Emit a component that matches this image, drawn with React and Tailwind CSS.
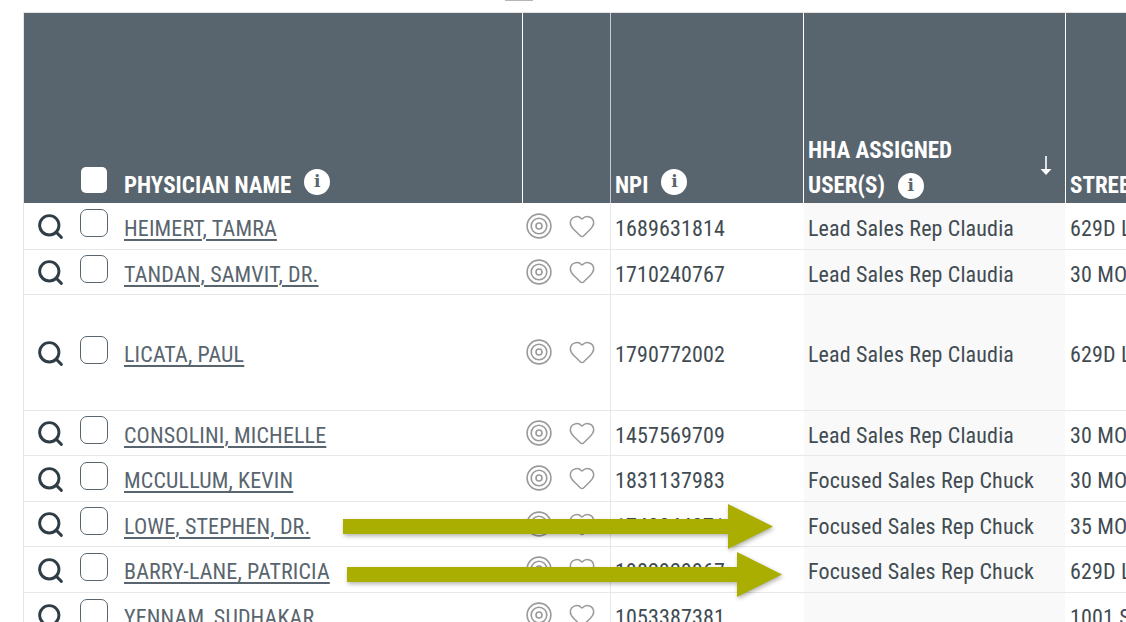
import { Search, Heart } from "lucide-react";

const rows = [
  { name: "HEIMERT, TAMRA", npi: "1689631814", user: "Lead Sales Rep Claudia", street: "629D LAKE", h: "h-[47px]" },
  { name: "TANDAN, SAMVIT, DR.", npi: "1710240767", user: "Lead Sales Rep Claudia", street: "30 MONTGOMERY", h: "h-[45px]" },
  { name: "LICATA, PAUL", npi: "1790772002", user: "Lead Sales Rep Claudia", street: "629D LAKE", h: "h-[116px]" },
  { name: "CONSOLINI, MICHELLE", npi: "1457569709", user: "Lead Sales Rep Claudia", street: "30 MONTGOMERY", h: "h-[45px]" },
  { name: "MCCULLUM, KEVIN", npi: "1831137983", user: "Focused Sales Rep Chuck", street: "30 MONTGOMERY", h: "h-[46px]" },
  { name: "LOWE, STEPHEN, DR.", npi: "1740244071", user: "Focused Sales Rep Chuck", street: "35 MONTGOMERY", h: "h-[45px]" },
  { name: "BARRY-LANE, PATRICIA", npi: "1982929967", user: "Focused Sales Rep Chuck", street: "629D LAKE", h: "h-[46px]" },
  { name: "YENNAM, SUDHAKAR", npi: "1053387381", user: "", street: "1001 SOUTH", h: "h-[46px]" },
];

const cols = "grid grid-cols-[50px_46px_402px_1px_87px_1px_192px_1px_261px_1px_200px]";

const Info = () => (
  <span className="inline-flex items-center justify-center w-[26px] h-[26px] rounded-full bg-white text-[#59656e] text-[17px] font-bold [font-family:'DejaVu_Serif',serif] [font-stretch:100%] leading-none">
    i
  </span>
);

const TargetIcon = () => (
  <svg width="26" height="26" viewBox="0 0 26 26" fill="none" stroke="#9a9a9a" strokeWidth="1.6">
    <circle cx="13" cy="13" r="11.9" />
    <circle cx="13" cy="13" r="7.8" />
    <circle cx="13" cy="13" r="3" />
  </svg>
);

const Arrow = ({ className, width }) => (
  <svg className={className} width={width} height="45" viewBox={`0 0 ${width} 45`} style={{ filter: "drop-shadow(1px 2px 2px rgba(0,0,0,0.3))" }}>
    <polygon
      fill="#a9ae00"
      points={`0,15 ${width - 45},15 ${width - 45},0 ${width},22.5 ${width - 45},45 ${width - 45},30 0,30`}
    />
  </svg>
);

export default function App() {
  return (
    <div className="relative w-[1126px] h-[622px] overflow-hidden bg-white [font-family:Roboto,sans-serif] [font-stretch:75%]">
      {/* scrollbar stub above the table */}
      <div className="h-[1px] w-[28px] ml-[505px] bg-[#b5b5b5]"></div>
      <div className="ml-[23px] mt-[11px] border-l border-[#e6e6e6] w-[1200px]">
        {/* Header */}
        <div className={`${cols} h-[191px] bg-[#59656e] border-t border-[#e3e3e3] text-white font-bold text-[23px] leading-[35px]`}>
          <div></div>
          <div className="flex items-end pb-[10px] pl-[7px]">
            <div className="w-[26px] h-[26px] rounded-[5px] bg-white"></div>
          </div>
          <div className="flex items-end gap-[13px] pl-[4px]">
            <span>PHYSICIAN NAME</span>
            <span className="mb-[6px]"><Info /></span>
          </div>
          <div className="bg-white"></div>
          <div></div>
          <div className="bg-[#c9cdd0]"></div>
          <div className="flex items-end gap-[13px] pl-[4px]">
            <span>NPI</span>
            <span className="mb-[6px]"><Info /></span>
          </div>
          <div className="bg-white"></div>
          <div className="relative flex items-end pl-[4px]">
            <div>
              <div>HHA ASSIGNED</div>
              <div className="flex items-center gap-[13px]">
                <span>USER(S)</span>
                <Info />
              </div>
            </div>
            <svg className="absolute right-[12px] bottom-[27px]" width="14" height="20" viewBox="0 0 14 20" fill="white">
              <rect x="6.2" y="0" width="1.6" height="14" />
              <polygon points="1.5,13 12.5,13 7,19" />
            </svg>
          </div>
          <div className="bg-white"></div>
          <div className="flex items-end pl-[4px]">STREET</div>
        </div>

        {/* Rows */}
        {rows.map((row) => (
          <div
            key={row.npi}
            className={`${cols} ${row.h} border-b border-[#e8e8e8] text-[22px] text-[#414b52] tracking-[0.15px]`}
          >
            <div className="flex items-center justify-center pl-[3px] pt-[1px]">
              <Search size={29} strokeWidth={2.4} color="#2f3e46" />
            </div>
            <div className="flex items-center pl-[6px]">
              <div className="w-[28px] h-[28px] mb-[6px] rounded-[7px] border border-[#59656e] bg-white"></div>
            </div>
            <div className="flex items-center pl-[4px] pt-[4px] relative">
              <span className="underline decoration-2 underline-offset-[3px] text-[#59656e]">{row.name}</span>
            </div>
            <div></div>
            <div className="flex items-center gap-[16px] pl-[3px]">
              <span className="mb-[1px]"><TargetIcon /></span>
              <Heart size={28} strokeWidth={1.3} color="#9a9a9a" className="mb-[1px]" />
            </div>
            <div className="bg-[#e8e8e8]"></div>
            <div className="flex items-center pl-[4px] pt-[4px]">{row.npi}</div>
            <div></div>
            <div className="flex items-center pl-[4px] pt-[4px] bg-[#f9f9f9]">{row.user}</div>
            <div></div>
            <div className="flex items-center pl-[4px] pt-[4px] whitespace-nowrap">{row.street}</div>
          </div>
        ))}
      </div>

      {/* Annotation arrows */}
      <Arrow className="absolute left-[343px] top-[504px]" width={430} />
      <Arrow className="absolute left-[347px] top-[552px]" width={435} />
    </div>
  );
}
